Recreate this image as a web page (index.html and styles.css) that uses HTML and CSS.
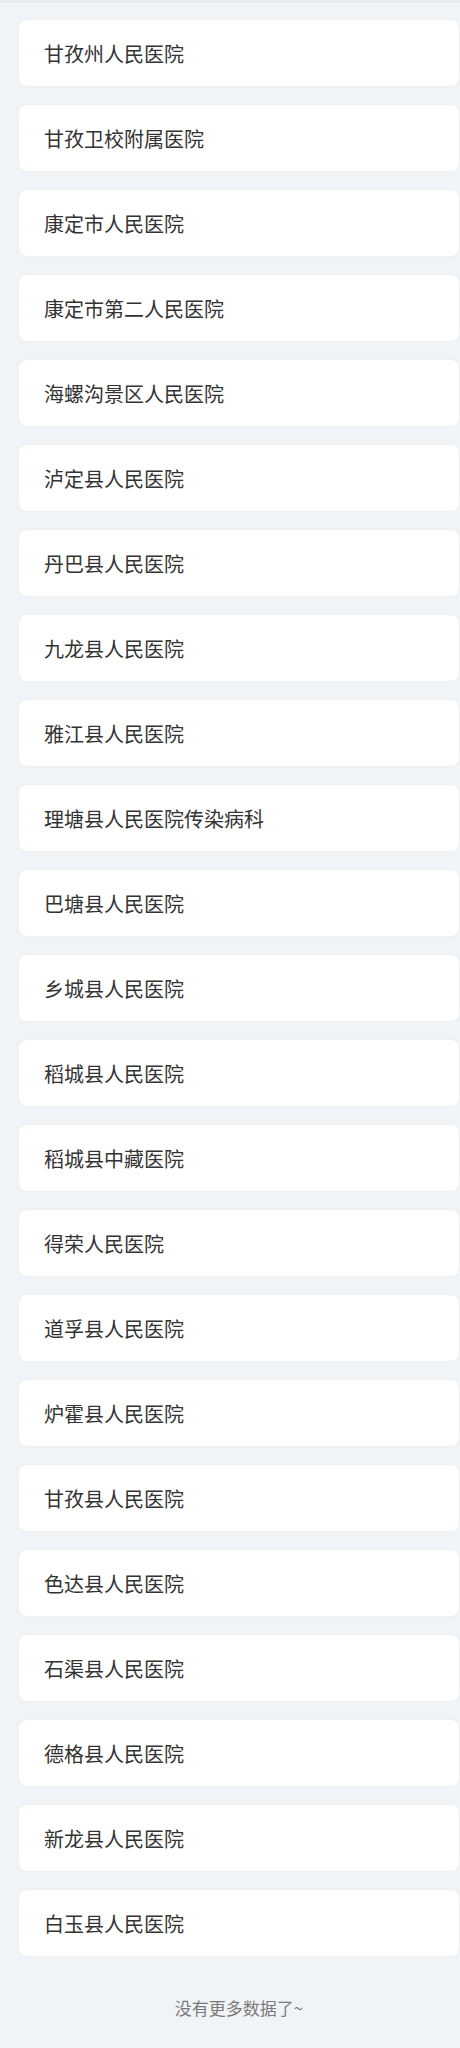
FILE: index.html
```html
<!DOCTYPE html>
<html lang="zh">
<head>
<meta charset="utf-8">
<link rel="stylesheet" href="styles.css">
</head>
<body>
<div class="topbar"></div>
<ul class="list">
<li class="card">甘孜州人民医院</li>
<li class="card">甘孜卫校附属医院</li>
<li class="card">康定市人民医院</li>
<li class="card">康定市第二人民医院</li>
<li class="card">海螺沟景区人民医院</li>
<li class="card">泸定县人民医院</li>
<li class="card">丹巴县人民医院</li>
<li class="card">九龙县人民医院</li>
<li class="card">雅江县人民医院</li>
<li class="card">理塘县人民医院传染病科</li>
<li class="card">巴塘县人民医院</li>
<li class="card">乡城县人民医院</li>
<li class="card">稻城县人民医院</li>
<li class="card">稻城县中藏医院</li>
<li class="card">得荣人民医院</li>
<li class="card">道孚县人民医院</li>
<li class="card">炉霍县人民医院</li>
<li class="card">甘孜县人民医院</li>
<li class="card">色达县人民医院</li>
<li class="card">石渠县人民医院</li>
<li class="card">德格县人民医院</li>
<li class="card">新龙县人民医院</li>
<li class="card">白玉县人民医院</li>
</ul>
<div class="footer">没有更多数据了~</div>
</body>
</html>
```
FILE: styles.css
```css
html, body {
  margin: 0;
  padding: 0;
  background: #f1f4f7;
  font-family: "Noto Sans CJK SC", "Noto Sans", sans-serif;
}
.topbar {
  height: 3px;
  background: #e8edf1;
}
.list {
  list-style: none;
  margin: 0;
  padding: 17px 1px 0 19px;
  display: flex;
  flex-direction: column;
  gap: 19px;
}
.card {
  height: 66px;
  box-sizing: border-box;
  background: #ffffff;
  border-radius: 8px;
  box-shadow: 0 0 2px rgba(0, 0, 0, 0.06);
  display: flex;
  align-items: center;
  padding-left: 25px;
  font-size: 20px;
  color: #333333;
}
.footer {
  margin: 40px 1px 0 19px;
  text-align: center;
  font-size: 17px;
  line-height: 24px;
  color: #7a7a7a;
}
```
